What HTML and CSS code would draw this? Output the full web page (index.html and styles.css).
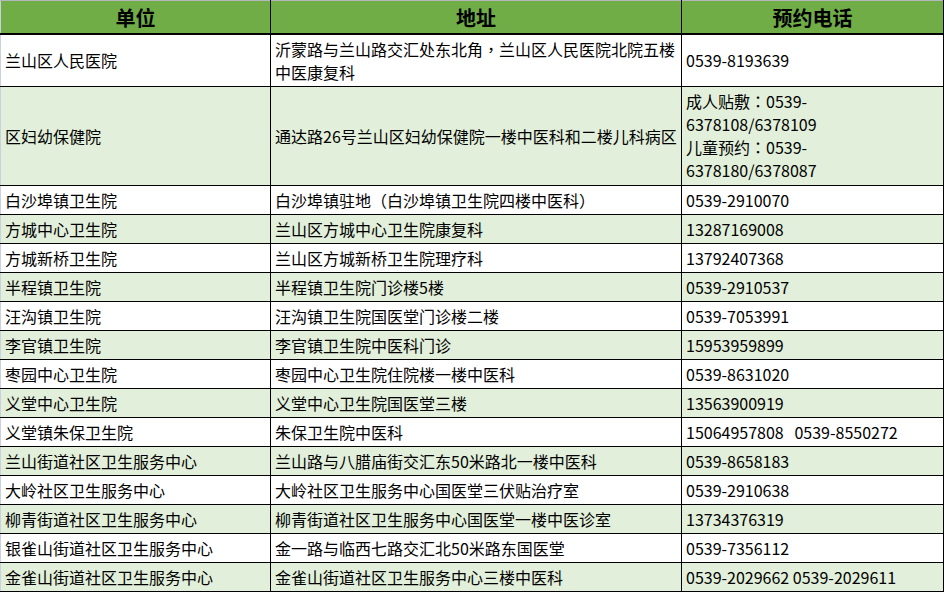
FILE: index.html
```html
<!DOCTYPE html>
<html lang="zh-CN">
<head>
<meta charset="utf-8">
<title>预约表</title>
<link rel="stylesheet" href="styles.css">
</head>
<body>
<table class="sheet">
  <colgroup>
    <col class="c-unit">
    <col class="c-addr">
    <col class="c-tel">
  </colgroup>
  <thead>
    <tr class="head">
      <th>单位</th>
      <th>地址</th>
      <th>预约电话</th>
    </tr>
  </thead>
  <tbody>
    <tr class="r-tall1">
      <td>兰山区人民医院</td>
      <td>沂蒙路与兰山路交汇处东北角<span class="punct" lang="zh-TW">，</span>兰山区人民医院北院五楼<br>中医康复科</td>
      <td>0539-8193639</td>
    </tr>
    <tr class="alt r-tall2">
      <td>区妇幼保健院</td>
      <td>通达路26号兰山区妇幼保健院一楼中医科和二楼儿科病区</td>
      <td>成人贴敷<span class="punct" lang="zh-TW">：</span>0539-<br>6378108/6378109<br>儿童预约<span class="punct" lang="zh-TW">：</span>0539-<br>6378180/6378087</td>
    </tr>
    <tr>
      <td>白沙埠镇卫生院</td>
      <td>白沙埠镇驻地<span class="punct" lang="zh-TW">（</span>白沙埠镇卫生院四楼中医科<span class="punct" lang="zh-TW">）</span></td>
      <td>0539-2910070</td>
    </tr>
    <tr class="alt">
      <td>方城中心卫生院</td>
      <td>兰山区方城中心卫生院康复科</td>
      <td>13287169008</td>
    </tr>
    <tr>
      <td>方城新桥卫生院</td>
      <td>兰山区方城新桥卫生院理疗科</td>
      <td>13792407368</td>
    </tr>
    <tr class="alt">
      <td>半程镇卫生院</td>
      <td>半程镇卫生院门诊楼5楼</td>
      <td>0539-2910537</td>
    </tr>
    <tr>
      <td>汪沟镇卫生院</td>
      <td>汪沟镇卫生院国医堂门诊楼二楼</td>
      <td>0539-7053991</td>
    </tr>
    <tr class="alt">
      <td>李官镇卫生院</td>
      <td>李官镇卫生院中医科门诊</td>
      <td>15953959899</td>
    </tr>
    <tr>
      <td>枣园中心卫生院</td>
      <td>枣园中心卫生院住院楼一楼中医科</td>
      <td>0539-8631020</td>
    </tr>
    <tr class="alt">
      <td>义堂中心卫生院</td>
      <td>义堂中心卫生院国医堂三楼</td>
      <td>13563900919</td>
    </tr>
    <tr>
      <td>义堂镇朱保卫生院</td>
      <td>朱保卫生院中医科</td>
      <td>15064957808&nbsp;&nbsp;&nbsp;0539-8550272</td>
    </tr>
    <tr class="alt">
      <td>兰山街道社区卫生服务中心</td>
      <td>兰山路与八腊庙街交汇东50米路北一楼中医科</td>
      <td>0539-8658183</td>
    </tr>
    <tr>
      <td>大岭社区卫生服务中心</td>
      <td>大岭社区卫生服务中心国医堂三伏贴治疗室</td>
      <td>0539-2910638</td>
    </tr>
    <tr class="alt">
      <td>柳青街道社区卫生服务中心</td>
      <td>柳青街道社区卫生服务中心国医堂一楼中医诊室</td>
      <td>13734376319</td>
    </tr>
    <tr>
      <td>银雀山街道社区卫生服务中心</td>
      <td>金一路与临西七路交汇北50米路东国医堂</td>
      <td>0539-7356112</td>
    </tr>
    <tr class="alt">
      <td>金雀山街道社区卫生服务中心</td>
      <td>金雀山街道社区卫生服务中心三楼中医科</td>
      <td>0539-2029662 0539-2029611</td>
    </tr>
  </tbody>
</table>
</body>
</html>
```
FILE: styles.css
```css
html, body {
  margin: 0;
  padding: 0;
  background: #ffffff;
}

.sheet {
  border-collapse: collapse;
  table-layout: fixed;
  width: 943px;
  font-family: "Noto Sans CJK SC", "Noto Sans", sans-serif;
  font-size: 16px;
  color: #000;
  border-top: 1px solid #b4b8bc;
}

.c-unit { width: 270px; }
.c-addr { width: 411px; }
.c-tel { width: 262px; }

.sheet th,
.sheet td {
  border: 1px solid #000;
  padding: 0 0 0 4px;
  text-align: left;
  vertical-align: middle;
  line-height: 23px;
  white-space: nowrap;
  overflow: hidden;
}

.sheet th:first-child,
.sheet td:first-child {
  border-left: 1px solid #c9d1e1;
}

.sheet tr:first-child th {
  border-top: 1px solid #b4b8bc;
}

.head th {
  background: #70ad47;
  font-size: 20px;
  font-weight: 700;
  text-align: center;
  padding: 0;
  height: 32px;
  border-bottom: 2px solid #000;
}

.sheet td {
  height: 28px;
}

.r-tall1 td { height: 51px; }
.r-tall2 td { height: 98px; }

.alt td {
  background: #e2efda;
}

.punct {
  font-family: "Noto Sans CJK TC", "Noto Sans CJK SC", sans-serif;
}
```
